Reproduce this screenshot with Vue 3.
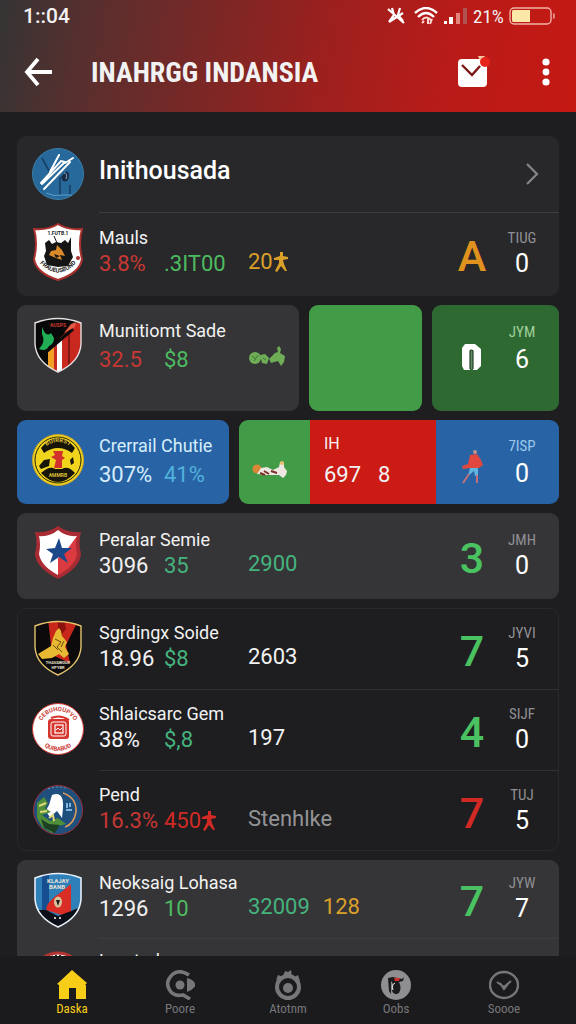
<template>
    <div class="screen">
        <svg class="defs" aria-hidden="true">
            <defs>
                <clipPath id="clip-shield"><path d="M3 7 Q26 -2 49 7 V28 Q48 46 26 56 Q4 46 3 28Z" /></clipPath>
                <clipPath id="clip-round"><circle cx="26" cy="29" r="25" /></clipPath>
                <path id="arc-top" d="M8 29 A18 18 0 0 1 44 29" />
                <path id="arc-bottom" d="M4 29 A22 22 0 0 0 48 29" />
                <path id="arc-wolf" d="M5 37 Q26 62 47 37" />
            </defs>
            <symbol id="figure" viewBox="0 0 16 20">
                <path d="M7 0 H10 V4 L15 5 V7 L10 8 L11 12 L14 19 H12 L8 14 L4 20 L2 19 L6 11 V8 L1 8 V6 L7 4Z" fill="currentColor" />
            </symbol>
        </svg>

        <header class="top">
            <div class="status">
                <span class="clock">1::04</span>
                <svg class="mute" viewBox="0 0 18 18">
                    <path d="M5 1 L7 8 L2 15 M13 1 L11 8 L16 14 M1 2 L17 16 M16 6 L2 15" stroke="#fff" stroke-width="2.2" fill="none" />
                </svg>
                <svg class="wifi" viewBox="0 0 24 18">
                    <path d="M1 6 Q12 -4 23 6 M4 10 Q12 2 20 10" stroke="#fff" stroke-width="2.4" fill="none" />
                    <path d="M8 13 Q12 8 17 13 M8 16 L10 14 M14 12 V17 M18 12 L16 17" stroke="#ffd9d3" stroke-width="2" fill="none" />
                </svg>
                <svg class="signal" viewBox="0 0 26 18">
                    <path d="M1 14 H4 V17 H1Z M6 10 H10 V17 H6Z" fill="#fff" />
                    <path d="M13 6 H17 V17 H13Z" fill="#e2857c" />
                    <path d="M20 1 H24 V17 H20Z" fill="#b05350" />
                </svg>
                <span class="charge">21%</span>
                <svg class="battery" viewBox="0 0 47 18">
                    <rect x="1" y="1" width="41" height="16" rx="4" fill="none" stroke="#f0b3a2" stroke-width="1.4" />
                    <path d="M4 3 H21 V15 H4 Q3 15 3 13 V5 Q3 3 4 3Z" fill="#fbe7a8" />
                    <path d="M44 6 Q46 6 46 9 Q46 12 44 12Z" fill="#e88f80" />
                </svg>
            </div>
            <div class="bar">
                <button class="icon-btn" aria-label="Back">
                    <svg width="28" height="30" viewBox="0 0 28 30">
                        <path d="M14 2 L3 15 L14 28 M3 15 H28" stroke="#fff" stroke-width="3.8" fill="none" />
                    </svg>
                </button>
                <h1>INAHRGG INDANSIA</h1>
                <button class="icon-btn mail" aria-label="Messages">
                    <svg width="34" height="32" viewBox="0 0 34 32">
                        <rect x="1" y="3" width="29" height="28" rx="4" fill="#fff" />
                        <path d="M5 9 L15 19 L23 10" stroke="#7c1714" stroke-width="2.4" fill="none" />
                        <path d="M21 0 H28 L24 7Z" fill="#f3c9a5" />
                        <circle cx="28" cy="6" r="5" fill="#e8231b" />
                    </svg>
                </button>
                <button class="icon-btn" aria-label="More">
                    <svg width="8" height="28" viewBox="0 0 8 28">
                        <g fill="#fff"><circle cx="4" cy="4" r="3.6" /><circle cx="4" cy="14" r="3.4" /><circle cx="4" cy="24" r="3.6" /></g>
                    </svg>
                </button>
            </div>
        </header>

        <main>
            <template v-for="block in blocks" :key="block.id">
                <section v-if="block.kind === 'list'" class="card" :class="block.tone">
                    <a v-if="block.title" href="#" class="league">
                        <svg class="crest" viewBox="0 0 52 58">
                            <circle cx="26" cy="29" r="25.5" fill="#27699a" stroke="#3b7ea8" />
                            <path d="M10 13 L17 26 M28 32 V50 M38 40 V50" stroke="#173f66" stroke-width="1.6" fill="none" />
                            <path d="M29 32 Q36 22 37 30 Q37 38 31 36Z" fill="#1b2b45" />
                            <path d="M32 28 Q36 28 34 34" stroke="#7ea9c8" fill="none" />
                            <path d="M27 10 L18 27 M33 17 L29 16 L9 38 M33 17 L10 39 M38 17 L12 44 M41 13 L33 18" stroke="#fff" stroke-width="2" stroke-linecap="round" fill="none" />
                            <path d="M14 48 Q22 52 30 50 H40" stroke="#5aa0cb" fill="none" />
                        </svg>
                        <span>{{ block.title }}</span>
                        <svg class="chevron" viewBox="0 0 14 22"><path d="M2 1 L12 11 L2 21" stroke="#85858a" stroke-width="2.2" fill="none" /></svg>
                    </a>
                    <div v-for="row in block.rows" :key="row.name" class="row">
                        <svg class="crest" viewBox="0 0 52 58">
                            <g v-if="row.crest === 'wolf'">
                                <path d="M26 1 Q35 7 50 6 Q46 20 50 36 Q48 50 26 57 Q4 50 2 36 Q6 20 2 6 Q17 7 26 1Z" fill="#fff" stroke="#a93130" stroke-width="2" />
                                <text x="26" y="12" class="tiny dark">1.FUTB.1</text>
                                <path d="M13 20 L17 17 L20 21 L24 19 L29 20 L33 17 L36 20 L39 14 L39 28 L41 34 L36 43 L26 44 L15 42 L12 33 L14 28Z" fill="#151515" />
                                <path d="M22 13 L25 20" stroke="#151515" />
                                <path d="M25 22 L30 27 L33 33 L28 32 L30 37 L24 35 L17 32 L19 28 L24 27Z" fill="#d98a2b" />
                                <path d="M22 31 L28 33 L24 35Z" fill="#151515" />
                                <text class="ring dark"><textPath href="#arc-wolf" startOffset="50%">FRAUEUSBUND</textPath></text>
                                <circle cx="46" cy="35" r="2" fill="#a93130" />
                            </g>
                            <g v-else-if="row.crest === 'star'">
                                <path d="M26 2 Q35 9 49 8 Q46 18 49 30 Q48 44 26 55 Q4 44 3 30 Q6 18 3 8 Q17 9 26 2Z" fill="#a92b33" />
                                <path d="M26 6 Q34 13 45 12 Q43 20 45 30 Q43 42 26 51Z" fill="#dc3a41" />
                                <path d="M26 6 Q34 13 45 12 L34 27 L26 34 V51 Q9 42 7 30 Q9 20 7 12 Q18 13 26 6Z" fill="#fff" />
                                <path d="M27 14 L30 24 L40 24 L32 30 L36 39 L27 33 L18 39 L21 30 L14 25 L23 24Z" fill="#1c4789" />
                            </g>
                            <g v-else-if="row.crest === 'rider'">
                                <g clip-path="url(#clip-shield)">
                                    <rect width="52" height="58" fill="#0c0a0a" />
                                    <path d="M16 0 H47 L34 26 L38 44 L20 36Z" fill="#c8271c" />
                                    <path d="M26 0 V20 L34 10 L32 0Z" fill="#8b120e" />
                                    <path d="M24 12 L27 9 L29 12 L30 17 L35 23 L33 28 L37 35 L32 39 L27 35 L20 39 L10 40 L6 35 L19 27 L21 19Z" fill="#e8b932" />
                                    <path d="M23 20 L29 23 L25 28 L30 33 M21 26 L26 31 M32 22 L29 28" stroke="#6b4a10" fill="none" />
                                    <text x="26" y="45" class="tiny pale">THAVAWOUR</text>
                                    <text x="26" y="50" class="tiny pale">HPYBR</text>
                                </g>
                                <path d="M3 7 Q26 -2 49 7 V28 Q48 46 26 56 Q4 46 3 28Z" fill="none" stroke="#e3c46c" stroke-width="1.4" />
                            </g>
                            <g v-else-if="row.crest === 'seal'">
                                <circle cx="26" cy="29" r="25.5" fill="#fff" stroke="#cf3832" />
                                <text class="ring red"><textPath href="#arc-top" startOffset="50%">CEBUHOUPVO</textPath></text>
                                <text class="ring red"><textPath href="#arc-bottom" startOffset="50%">QUIBABUD</textPath></text>
                                <rect x="16" y="19" width="21" height="20" rx="3" fill="#d5352c" />
                                <path d="M19 18 Q28 14 37 20" stroke="#d5352c" stroke-width="2" fill="none" />
                                <rect x="19" y="22" width="15" height="14" rx="2" fill="none" stroke="#fff" />
                                <rect x="23" y="25" width="8" height="8" fill="none" stroke="#fff" stroke-width="1.2" />
                                <path d="M24 30 L26 28 L28 30 L30 28" stroke="#fff" fill="none" />
                            </g>
                            <g v-else-if="row.crest === 'globe'">
                                <circle cx="26" cy="29" r="24.5" fill="#1e4f7d" stroke="#9c2f38" />
                                <g clip-path="url(#clip-round)">
                                    <path d="M16 8 Q26 4 36 8" stroke="#6c9cc4" stroke-dasharray="2 2" fill="none" />
                                    <path d="M31 12 Q45 17 44 31 Q42 43 33 46" stroke="#d99a5a" stroke-width="1.6" fill="none" />
                                    <path d="M20 14 Q32 9 31 27 L30 37 L25 30 L18 36 Q12 30 17 24Z" fill="#fff" />
                                    <path d="M5 22 L12 16 L16 22 L13 27 L19 31 L10 34 L18 40 L26 37 L34 43 L27 45 L20 52 L11 47 L5 37Z" fill="#4f8f3a" />
                                    <path d="M9 38 L17 43 L28 44 L23 52 L12 47Z" fill="#1d4023" />
                                    <path d="M17 37 L21 34 L22 40 M7 25 L14 22 M8 31 L15 30" stroke="#e0d97a" stroke-width="2" fill="none" />
                                    <path d="M35 27 V22 M38 26 V22 M34 29 H40" stroke="#7fb5dd" stroke-width="2" fill="none" />
                                </g>
                            </g>
                            <g v-else-if="row.crest === 'blue'">
                                <g clip-path="url(#clip-shield)">
                                    <rect width="52" height="58" fill="#2f7fb9" />
                                    <path d="M10 0 H17 V46 H10Z" fill="#164e8f" />
                                    <path d="M39 13 V41 L30 44 L14 39 Q14 31 28 22Z" fill="#d92d26" />
                                    <path d="M3 39 L14 39 L26 45 L39 40 L49 36 V58 H3Z" fill="#0c0f18" />
                                    <text x="26" y="12" class="tiny pale strong">KLAJAY</text>
                                    <text x="25" y="18" class="tiny pale strong">BANB</text>
                                    <ellipse cx="26" cy="31" rx="4" ry="5.5" fill="#d9c39b" />
                                    <path d="M24 29 H28 L26 35Z" fill="#1d1b1b" />
                                    <path d="M22 47 H24 M27 47 H29" stroke="#fff" stroke-width="1.6" />
                                </g>
                                <path d="M3 7 Q26 -2 49 7 V28 Q48 46 26 56 Q4 46 3 28Z" fill="none" stroke="#e6eef8" stroke-width="1.6" />
                            </g>
                            <g v-else>
                                <circle cx="26" cy="29" r="25" fill="#fff" stroke="#b43434" stroke-width="3" />
                                <path d="M19 9 L21 7 M24 9 V6 M28 9 V6 M32 8 L34 9" stroke="#222" stroke-width="2" />
                            </g>
                        </svg>
                        <div class="body">
                            <div class="info">
                                <h2>{{ row.name }}</h2>
                                <p class="stats">
                                    <span v-for="s in row.stats" :key="s.text" :class="s.color">{{ s.text }}<svg v-if="s.figure" class="figure"><use href="#figure" /></svg></span>
                                </p>
                            </div>
                            <p class="extra">
                                <span v-for="e in row.extra" :key="e.text" :class="e.color">{{ e.text }}<svg v-if="e.figure" class="figure"><use href="#figure" /></svg></span>
                            </p>
                            <strong class="score" :class="row.tone">{{ row.score }}</strong>
                            <div class="day"><small>{{ row.day }}</small><b>{{ row.count }}</b></div>
                        </div>
                    </div>
                </section>

                <div v-else-if="block.kind === 'tiles'" class="tiles three">
                    <section class="card mid row tile-a">
                        <svg class="crest" viewBox="0 0 52 58">
                            <g clip-path="url(#clip-shield)">
                                <rect width="52" height="58" fill="#080808" />
                                <path d="M40 10 L52 2 V58 H16 V34Z" fill="#c9281f" />
                                <path d="M16 34 L22 30 V58 H16Z" fill="#f0a024" />
                                <path d="M25 27 L30 22 V58 H25Z" fill="#fff" />
                                <path d="M36 18 L38 16 V58 H36Z" fill="#7e1713" />
                                <path d="M10 11 Q14 22 19 17 L22 22 Q22 28 17 30 Q14 36 7 33 Q14 26 10 18Z" fill="#1fae53" />
                                <path d="M14 36 L41 13" stroke="#0a0a0a" stroke-width="3" fill="none" />
                                <path d="M32 17 L39 8 L44 6 L43 11Z" fill="#e35a45" />
                                <text x="26" y="11" class="tiny red">AUSPS</text>
                            </g>
                            <path d="M3 7 Q26 -2 49 7 V28 Q48 46 26 56 Q4 46 3 28Z" fill="none" stroke="#e6e0e0" stroke-width="1.4" />
                        </svg>
                        <div class="body">
                            <div class="info">
                                <h2>Munitiomt Sade</h2>
                                <p class="stats"><span class="red">32.5</span><span class="green">$8</span></p>
                            </div>
                            <svg class="players" viewBox="0 0 38 20">
                                <g fill="#6fae57">
                                    <circle cx="7" cy="12" r="6" />
                                    <path d="M12 9 L17 8 L21 12 L19 18 L14 17Z M21 13 L27 7 L30 6 L29 2 L31 0 L33 3 L32 7 L37 10 L36 16 L33 20 L30 15 L23 17Z" />
                                </g>
                                <path d="M4 10 L8 13 M6 15 L10 9 M15 12 L18 14" stroke="#3c7434" fill="none" />
                            </svg>
                        </div>
                    </section>
                    <section class="card leaf"></section>
                    <section class="card forest tile-c">
                        <svg class="kit" viewBox="0 0 22 28">
                            <path d="M4 1 H14 L20 6 V23 L16 27 H12 V8 H9 V27 H3 L1 23 V5Z" fill="#fff" />
                            <path d="M9 26 V8 Q10 6 12 8 V26" stroke="#233f27" stroke-width="1.2" fill="#5c8d60" />
                        </svg>
                        <div class="day"><small>JYM</small><b>6</b></div>
                    </section>
                </div>

                <div v-else class="tiles two">
                    <section class="card blue row tile-d">
                        <svg class="crest" viewBox="0 0 52 58">
                            <circle cx="26" cy="29" r="25.5" fill="#f1d41c" stroke="#c9a52b" />
                            <circle cx="26" cy="29" r="23" fill="none" stroke="#23200d" />
                            <path d="M9 17 Q26 -3 43 17 L40 22 Q26 12 12 22Z M9 42 Q18 34 23 38 H30 Q36 34 43 42 Q26 60 9 42Z" fill="#171508" />
                            <text class="ring gold"><textPath href="#arc-top" startOffset="50%">BUIRRST</textPath></text>
                            <text x="26" y="46" class="tiny gold">AMMRB</text>
                            <path d="M21 20 H31 L30 25 L33 27 L30 29 V37 H22 L24 29 L19 26 L23 24Z" fill="#d2322b" />
                            <path d="M7 35 L12 29 L18 28 L17 35 L9 38Z M38 29 L41 26 L42 32 L39 34Z" fill="#171508" />
                        </svg>
                        <div class="body">
                            <div class="info">
                                <h2>Crerrail Chutie</h2>
                                <p class="stats"><span>307%</span><span class="cyan">41%</span></p>
                            </div>
                        </div>
                    </section>
                    <section class="card strip">
                        <div class="leaf part-a">
                            <svg class="players" viewBox="0 0 38 20">
                                <circle cx="6" cy="10" r="4.5" fill="#d98736" />
                                <path d="M10 9 L16 8 L22 11 L28 8 L29 3 L33 4 L33 8 L36 12 L35 16 L32 19 L28 16 L15 16 L6 15Z" fill="#efe7e2" />
                                <path d="M13 12 L18 15 M20 12 L26 14 M9 14 L14 16" stroke="#7d2f2b" stroke-width="2" />
                                <circle cx="31" cy="4" r="2" fill="#e9c06a" />
                            </svg>
                        </div>
                        <div class="crimson part-b">
                            <small>IH</small>
                            <p><span>697</span><span>8</span></p>
                        </div>
                        <div class="blue part-c">
                            <svg class="runner" viewBox="0 0 22 34">
                                <circle cx="14" cy="2" r="2" fill="#c98f8c" />
                                <path d="M9 5 L16 4 L20 10 L22 15 L18 18 H9 L2 19 L1 16 L7 14Z" fill="#e0483f" />
                                <path d="M9 18 H17 L17 26 H14 L13 21 L7 26Z" fill="#5fb4e0" />
                                <path d="M8 24 L2 33 M16 25 V33" stroke="#c0707a" stroke-width="2" />
                            </svg>
                            <div class="day"><small>7ISP</small><b>0</b></div>
                        </div>
                    </section>
                </div>
            </template>
        </main>

        <nav>
            <button v-for="tab in tabs" :key="tab" :class="{ active: tab === current }" @click="current = tab">
                <svg viewBox="0 0 30 30">
                    <path v-if="tab === 'Daska'" d="M15 0 L30 13 L28 15 H29 V29 H19 V18 H12 V29 H2 V15 L0 14Z" fill="currentColor" />
                    <g v-else-if="tab === 'Poore'">
                        <path d="M24 5 Q15 -1 8 4 Q0 11 4 19 Q8 27 18 25 L25 29" stroke="currentColor" stroke-width="3.6" fill="none" />
                        <circle cx="15" cy="15" r="4.5" fill="currentColor" />
                        <path d="M22 8 Q28 9 31 15 Q28 20 22 22Z" fill="currentColor" />
                    </g>
                    <g v-else-if="tab === 'Atotnm'">
                        <circle cx="15" cy="17" r="11" stroke="currentColor" stroke-width="4" fill="none" />
                        <circle cx="15" cy="18" r="5" fill="currentColor" />
                        <path d="M10 6 L12 1 L15 2 L18 0 L19 7Z M3 10 L5 5 L10 7Z M27 11 L25 5 L20 8Z M9 26 H21 L18 30 H12Z" fill="currentColor" />
                    </g>
                    <g v-else-if="tab === 'Oobs'">
                        <circle cx="15" cy="15" r="15" fill="#8f8f92" />
                        <path d="M7 8 L12 7 L21 9 L23 7 L22 11 L18 12 Q21 18 18 23 Q13 26 11 21 L12 14 L10 11 V24 L8 21Z" fill="#1b1b1d" />
                        <path d="M13 8 H19 L18 11 L14 11Z" fill="#d42a2a" />
                        <path d="M12 20 Q10 15 14 13" stroke="#eee" fill="none" />
                    </g>
                    <g v-else stroke="currentColor" fill="none">
                        <ellipse cx="15" cy="15" rx="14" ry="13" stroke-width="2.4" />
                        <path d="M8 12 L15 17 L22 11 M11 13 L15 19 L19 14" stroke-width="2" />
                    </g>
                </svg>
                <span>{{ tab }}</span>
            </button>
        </nav>
    </div>
</template>

<script setup>
import { ref } from 'vue'

const tabs = ['Daska', 'Poore', 'Atotnm', 'Oobs', 'Soooe']
const current = ref('Daska')

const blocks = [
    {
        id: 1, kind: 'list', tone: 'dark', title: 'Inithousada',
        rows: [
            { crest: 'wolf', name: 'Mauls', stats: [{ text: '3.8%', color: 'red' }, { text: '.3IT00', color: 'green' }], extra: [{ text: '20', color: 'amber', figure: true }], score: 'A', tone: 'orange', day: 'TIUG', count: 0 },
        ],
    },
    { id: 2, kind: 'tiles' },
    { id: 3, kind: 'strip' },
    {
        id: 4, kind: 'list', tone: 'mid single',
        rows: [
            { crest: 'star', name: 'Peralar Semie', stats: [{ text: '3096' }, { text: '35', color: 'mint' }], extra: [{ text: '2900', color: 'mint' }], score: '3', tone: 'lime', day: 'JMH', count: 0 },
        ],
    },
    {
        id: 5, kind: 'list', tone: 'outline',
        rows: [
            { crest: 'rider', name: 'Sgrdingx Soide', stats: [{ text: '18.96' }, { text: '$8', color: 'mint' }], extra: [{ text: '2603' }], score: '7', tone: 'lime', day: 'JYVI', count: 5 },
            { crest: 'seal', name: 'Shlaicsarc Gem', stats: [{ text: '38%' }, { text: '$,8', color: 'mint' }], extra: [{ text: '197' }], score: '4', tone: 'lime', day: 'SIJF', count: 0 },
            { crest: 'globe', name: 'Pend', stats: [{ text: '16.3%', color: 'red' }, { text: '450', color: 'scarlet', figure: true }], extra: [{ text: 'Stenhlke', color: 'grey' }], score: '7', tone: 'scarlet', day: 'TUJ', count: 5 },
        ],
    },
    {
        id: 6, kind: 'list', tone: 'mid tight',
        rows: [
            { crest: 'blue', name: 'Neoksaig Lohasa', stats: [{ text: '1296' }, { text: '10', color: 'green' }], extra: [{ text: '32009', color: 'mint' }, { text: '128', color: 'amber' }], score: '7', tone: 'lime', day: 'JYW', count: 7 },
            { crest: 'last', name: 'Laratado', stats: [], extra: [], score: '', day: '', count: '' },
        ],
    },
]
</script>

<style>
body {
    background: #1e1e20;
}
</style>

<style scoped>
.screen {
    height: 100vh;
    display: flex;
    flex-direction: column;
    overflow: hidden;
    background: #1e1e20;
    color: #f2f2f2;
    font-family: Roboto, "Liberation Sans", sans-serif;
}

.defs {
    position: absolute;
    width: 0;
    height: 0;
}

h1, h2, p {
    margin: 0;
    font-weight: 400;
}

button {
    border: 0;
    padding: 0;
    background: none;
    color: inherit;
    font: inherit;
    cursor: pointer;
}

svg {
    display: block;
    flex: none;
}

.top {
    flex: none;
    background: linear-gradient(100deg, #343434 0%, #55302f 14%, #782826 35%, #9c201e 56%, #b91b18 78%, #c51913 100%);
}

.status {
    display: flex;
    align-items: center;
    height: 32px;
    padding: 0 20px 0 23px;
}

.clock {
    flex: 1;
    font-size: 21px;
    font-weight: 500;
}

.mute { width: 18px; height: 18px; margin-right: 9px; }
.wifi { width: 24px; height: 18px; margin-right: 5px; }
.signal { width: 26px; height: 18px; margin-right: 4px; }
.charge { width: 36px; font-size: 19px; }
.battery { width: 47px; height: 18px; }

.bar {
    display: flex;
    align-items: center;
    height: 80px;
    padding: 0 26px 0 24px;
}

.bar h1 {
    flex: 1;
    padding-left: 39px;
    font-size: 28px;
    font-weight: 700;
    white-space: nowrap;
}

.bar h1,
.charge,
.day small,
nav {
    font-family: "Roboto Condensed", "Liberation Sans Narrow", Roboto, sans-serif;
}

.mail {
    margin-right: 51px;
}

main {
    flex: 1;
    min-height: 0;
    overflow: hidden;
    display: flex;
    flex-direction: column;
    gap: 9px;
    padding: 24px 17px 0;
}

.card {
    min-width: 0;
    flex: none;
    border-radius: 9px;
    overflow: hidden;
}

.dark { background: #28282a; }
.mid { background: #353537; }
.outline { box-shadow: inset 0 0 0 1px #29292b; }
.leaf { background: #429b47; }
.forest { background: #2e6932; }
.blue { background: #2864a5; }
.crimson { background: #cb1b14; }

.league {
    display: flex;
    align-items: center;
    gap: 15px;
    height: 76px;
    padding: 0 20px 0 15px;
    color: #fff;
    font-size: 25px;
    font-weight: 500;
    text-decoration: none;
}

.league span {
    flex: 1;
    padding-bottom: 8px;
}

.chevron {
    width: 14px;
    height: 22px;
}

.row {
    display: flex;
    gap: 15px;
    padding-left: 15px;
}

.crest {
    width: 52px;
    height: 58px;
}

.row .crest {
    margin-top: 11px;
}

.body {
    flex: 1;
    min-width: 0;
    display: flex;
    border-top: 1px solid transparent;
    padding: 12px 17px 16px 0;
}

.row + .row .body,
.league + .row .body {
    border-color: #3d3d40;
}

.league + .row .body {
    padding: 13px 17px 18px 0;
}

.outline .row + .row .body {
    border-color: #303033;
}

.single .body {
    padding: 14px 17px 19px 0;
}

.tight .body {
    padding: 10px 17px 15px 0;
}

.info {
    flex: 0 1 149px;
    min-width: 0;
    white-space: nowrap;
}

h2 {
    font-size: 18px;
    line-height: 24px;
}

.stats {
    display: grid;
    grid-template-columns: 65px auto;
    justify-content: start;
    font-size: 22px;
    line-height: 28px;
}

.stats span,
.extra span {
    display: flex;
    align-items: center;
}

.extra {
    flex: 1;
    display: flex;
    align-items: flex-start;
    gap: 13px;
    padding-top: 22px;
    font-size: 22px;
    line-height: 28px;
}

.figure {
    width: 16px;
    height: 20px;
}

.score {
    width: 60px;
    padding-top: 8px;
    font-size: 43px;
    font-weight: 500;
    line-height: 44px;
    text-align: center;
}

.day {
    width: 40px;
    text-align: center;
}

.day small {
    display: block;
    color: #909094;
    font-size: 15px;
    line-height: 24px;
}

.day b {
    display: block;
    color: #fff;
    font-size: 25px;
    font-weight: 400;
    line-height: 28px;
}

.red { color: #c73834; }
.scarlet { color: #d12a25; }
.green { color: #4dbb60; }
.mint { color: #45b37e; }
.lime { color: #4bc261; }
.amber { color: #dba029; }
.orange { color: #e0921f; }
.cyan { color: #52b2dc; }
.grey { color: #949497; }

.tiles {
    flex: none;
    display: grid;
    gap: 10px;
}

.three {
    grid-template-columns: 282fr 113fr 127fr;
}

.two {
    grid-template-columns: 212fr 320fr;
}

.tile-a {
    min-height: 106px;
}

.tile-a .body,
.tile-d .body {
    padding: 13px 11px 15px 0;
}

.tile-a .stats,
.tile-d .stats {
    padding-top: 3px;
}

.tile-c,
.part-c {
    display: flex;
    justify-content: flex-end;
    padding: 15px 17px 0 0;
}

.tile-c .day small { color: #9fd09a; }
.tile-c .day b,
.part-c .day b { padding-top: 2px; }

.kit {
    width: 22px;
    height: 28px;
    margin: 23px 19px 0 0;
}

.players {
    width: 38px;
    height: 20px;
}

.tile-a .players {
    margin-top: 27px;
}

.tile-d {
    color: #d5eefc;
}

.strip {
    display: grid;
    grid-template-columns: 71fr 126fr 123fr;
}

.part-a {
    padding: 39px 0 0 12px;
}

.part-b {
    padding: 12px 0 0 14px;
}

.part-b small {
    display: block;
    font-size: 16px;
    line-height: 24px;
}

.part-b p {
    display: flex;
    gap: 17px;
    padding-top: 5px;
    font-size: 22px;
    line-height: 28px;
}

.part-c {
    padding-top: 14px;
}

.part-c .day small { color: #9cc8ec; }

.runner {
    width: 22px;
    height: 34px;
    margin: 16px 19px 0 0;
}

nav {
    flex: none;
    display: flex;
    height: 68px;
    padding: 0 18px;
    background: #1b1b1d;
}

nav button {
    flex: 1;
    display: flex;
    flex-direction: column;
    align-items: center;
    padding-top: 14px;
    color: #77777a;
    font-size: 13px;
    line-height: 18px;
}

nav svg {
    width: 30px;
    height: 30px;
}

nav .active {
    color: #f7cd17;
}

.tiny, .ring {
    font-size: 5px;
    font-weight: 700;
    text-anchor: middle;
}

.ring { font-size: 6px; }
.tiny.dark, .ring.dark { fill: #222; }
.tiny.red, .ring.red { fill: #cb3a33; }
.tiny.gold, .ring.gold { fill: #d9bd39; }
.tiny.pale { fill: #e9e2d2; font-size: 4px; }
.tiny.strong { font-size: 6px; }
</style>
